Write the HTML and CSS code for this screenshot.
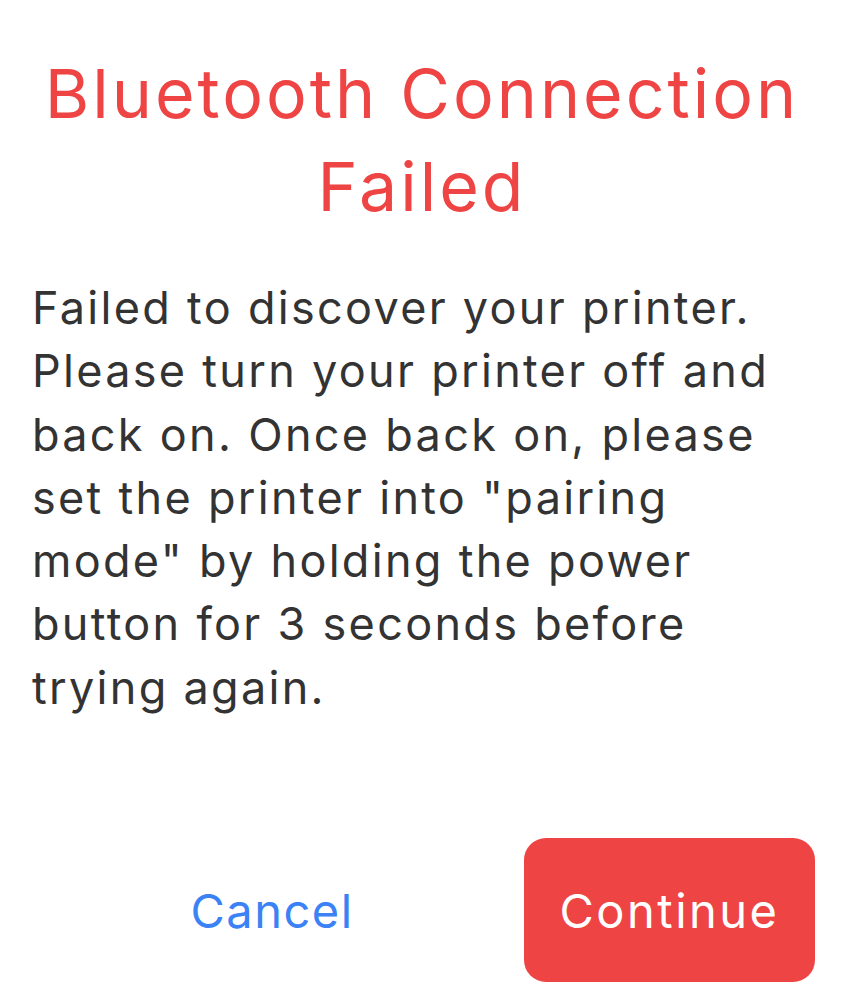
FILE: index.html
```html
<!DOCTYPE html>
<html>
<head>
<meta charset="utf-8">
<link rel="stylesheet" href="styles.css">
</head>
<body>
<div class="dialog">
  <h1 class="title">Bluetooth Connection Failed</h1>
  <p class="message">Failed to discover your printer. Please turn your printer off and back on. Once back on, please set the printer into "pairing mode" by holding the power button for 3 seconds before trying again.</p>
  <div class="actions">
    <button class="btn-cancel">Cancel</button>
    <button class="btn-continue">Continue</button>
  </div>
</div>
</body>
</html>
```
FILE: styles.css
```css
html, body {
  margin: 0;
  padding: 0;
  background: #ffffff;
}
.dialog {
  height: 999px;
  display: flex;
  flex-direction: column;
  font-family: Inter, "Noto Sans", sans-serif;
  box-sizing: border-box;
  padding: 0 32px 17px 32px;
}
.title {
  margin: 47px 0 0 0;
  padding-right: 20px;
  font-weight: 400;
  font-size: 68px;
  line-height: 93px;
  text-align: center;
  color: #ef4444;
  letter-spacing: 3px;
}
.message {
  margin: 43px 0 0 0;
  font-size: 45px;
  line-height: 63.3px;
  color: #333333;
  letter-spacing: 2.3px;
}
.actions {
  margin-top: auto;
  display: grid;
  grid-template-columns: 1fr 291px;
  gap: 12px;
  height: 144px;
  padding-right: 17px;
}
.btn-cancel, .btn-continue {
  border: none;
  font-family: inherit;
  font-size: 47px;
  letter-spacing: 1.5px;
  cursor: pointer;
}
.btn-cancel {
  background: transparent;
  color: #3b82f6;
}
.btn-continue {
  background: #ef4444;
  color: #ffffff;
  border-radius: 22px;
  letter-spacing: 2.5px;
}
```
